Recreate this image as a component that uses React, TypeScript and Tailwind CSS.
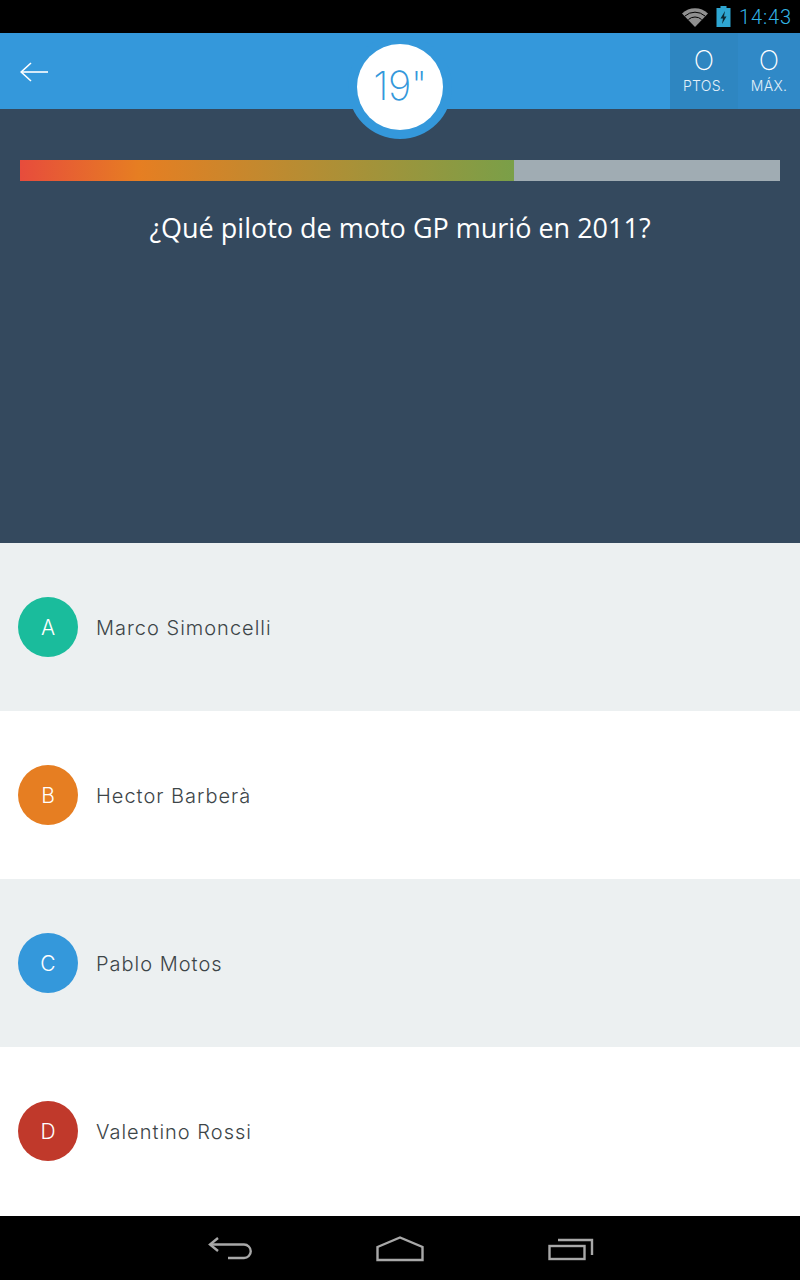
const answers = [
  { letter: "A", name: "Marco Simoncelli", color: "bg-[#1abc9c]", row: "bg-[#ecf0f1] h-[168px]" },
  { letter: "B", name: "Hector Barberà", color: "bg-[#e67e22]", row: "bg-white h-[168px]" },
  { letter: "C", name: "Pablo Motos", color: "bg-[#3498db]", row: "bg-[#ecf0f1] h-[168px]" },
  { letter: "D", name: "Valentino Rossi", color: "bg-[#c0392b]", row: "bg-white h-[169px] pb-[1px]" },
];

function StatusBar() {
  return (
    <div className="h-[33px] bg-black flex items-center justify-end pr-[8px] gap-[7px]">
      <svg width="26" height="20" viewBox="0 0 26 20" className="mr-[1px]">
        <path d="M0 6.5 A19 19 0 0 1 26 6.5 L13 20 Z" fill="#8f8f8f" />
        <path d="M3 9 A15 15 0 0 1 23 9" fill="none" stroke="#000" strokeWidth="1" />
        <path d="M6.4 12.5 A10 10 0 0 1 19.6 12.5" fill="none" stroke="#000" strokeWidth="1" />
      </svg>
      <svg width="15" height="21" viewBox="0 0 15 21">
        <rect x="4.5" y="0" width="6" height="3" fill="#2ea6d2" />
        <rect x="0.5" y="2" width="14" height="19" fill="#2ea6d2" />
        <path d="M9 5 L4.5 12.5 H7 L6 18 L10.5 10.5 H8 Z" fill="#0b2a36" />
      </svg>
      <span className="font-['Roboto',sans-serif] text-[20px] leading-none text-[#33b5e5] font-light tracking-[0.9px] ml-[1px]">14:43</span>
    </div>
  );
}

function Score({ label, bg, width }: { label: string; bg: string; width: string }) {
  return (
    <div className={`${bg} ${width} flex flex-col items-center pt-[16px] text-white`}>
      <span className="text-[27px] leading-[24px] font-extralight">O</span>
      <span className="mt-[5px] text-[14px] leading-[16px] font-light tracking-[0.3px] text-[#e3f0f9]">{label}</span>
    </div>
  );
}

function Header() {
  return (
    <div className="relative h-[76px] bg-[#3498db] flex items-stretch justify-between font-['Inter',sans-serif]">
      <div className="flex items-center pl-[20px] pt-[1px]">
        <svg width="28" height="20" viewBox="0 0 28 20" fill="none" stroke="#ffffff" strokeWidth="1.6">
          <path d="M1 10 H28" />
          <path d="M11 1 L1.2 10 L11 19" />
        </svg>
      </div>
      <div className="flex">
        <Score label="PTOS." bg="bg-[#2e86c1]" width="w-[68px]" />
        <Score label="MÁX." bg="bg-[#3089c7]" width="w-[62px]" />
      </div>
      <div className="absolute left-[348px] top-[2px] w-[104px] h-[104px] rounded-full bg-[#3498db] flex items-center justify-center">
        <div className="w-[86px] h-[86px] rounded-full bg-white flex items-center justify-center">
          <span className="text-[40px] leading-none font-extralight text-[#3498db] tracking-[-0.5px] -mt-[2px]">19"</span>
        </div>
      </div>
    </div>
  );
}

function Question() {
  return (
    <div className="h-[434px] bg-[#34495e] px-[20px] pt-[51px]">
      <div className="h-[21px] bg-[#a0acb3] flex">
        <div className="w-[494px] h-full bg-[linear-gradient(90deg,#e74c3c_0%,#e67e22_24%,#7a9f48_100%)]" />
      </div>
      <p className="mt-[29px] text-center text-white text-[27px] leading-[36px] font-['Open_Sans',sans-serif]">
        ¿Qué piloto de moto GP murió en 2011?
      </p>
    </div>
  );
}

export default function App() {
  return (
    <div className="w-[800px] h-[1280px] flex flex-col overflow-hidden">
      <StatusBar />
      <Header />
      <Question />
      <div className="font-['Inter',sans-serif]">
        {answers.map((a) => (
          <div key={a.letter} className={`${a.row} flex items-center pl-[18px]`}>
            <div className={`${a.color} w-[60px] h-[60px] rounded-full flex items-center justify-center pt-[2px] text-white text-[21px] font-light`}>
              {a.letter}
            </div>
            <span className="ml-[18px] pt-[1px] text-[20px] font-light tracking-[1px] text-[#3d4548]">{a.name}</span>
          </div>
        ))}
      </div>
      <div className="h-[64px] bg-black flex items-center justify-center pl-[2px] pt-[2px]">
        <svg width="44" height="26" viewBox="0 0 44 26" fill="none" stroke="#a8a8a8" strokeWidth="2.4" className="mr-[124px]">
          <path d="M10 2 L2 8.5 L10 15" />
          <path d="M2 8.5 H36 A6.5 6.5 0 0 1 36 22 H20" />
        </svg>
        <svg width="48" height="26" viewBox="0 0 48 26" fill="none" stroke="#a8a8a8" strokeWidth="2.4" className="mr-[124px]">
          <path d="M1.5 11 L24 1.5 L46.5 11 V24 H1.5 Z" />
        </svg>
        <svg width="46" height="24" viewBox="0 0 46 24" fill="none" stroke="#a8a8a8" strokeWidth="2.4">
          <rect x="1.5" y="9" width="35" height="13" />
          <path d="M10 3 H44 V18" />
        </svg>
      </div>
    </div>
  );
}
